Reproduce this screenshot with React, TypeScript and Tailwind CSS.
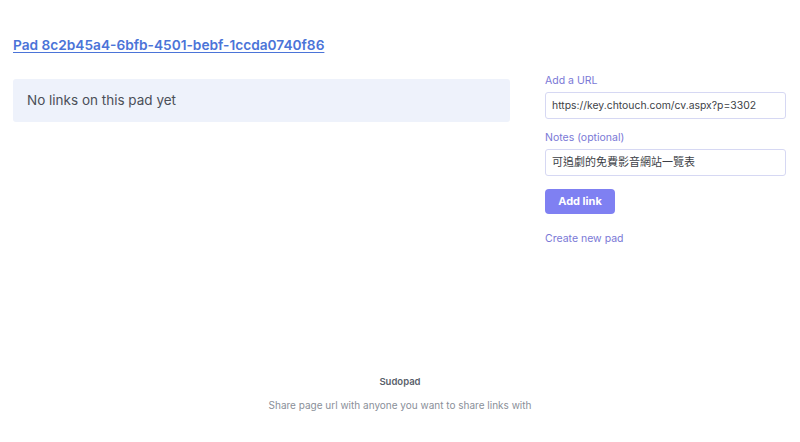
import React from "react";

export default function App() {
  return (
    <div
      className="flex h-[442px] w-[800px] flex-col bg-white"
      style={{ fontFamily: 'Inter, "Noto Sans CJK TC", sans-serif' }}
    >
      <main className="flex-1 px-[13px] pt-[32px]">
        <a
          href="#"
          className="text-[13.7px] font-semibold text-[#4b74d8] underline underline-offset-2"
        >
          Pad 8c2b45a4-6bfb-4501-bebf-1ccda0740f86
        </a>
        <div className="mt-[23px] flex gap-[35px]">
          <div className="flex h-[43px] w-[497px] items-center rounded-[3px] bg-[#eef2fb] px-[14px] text-[13.5px] text-[#4b4f58]">
            No links on this pad yet
          </div>
          <div className="flex w-[241px] flex-col">
            <label className="-mt-[5px] text-[10.5px] leading-[14px] text-[#7a78d6]">Add a URL</label>
            <div className="mt-[4px] flex h-[27px] items-center rounded-[3px] border border-[#d6d8f3] px-[6px] text-[10.4px] text-[#3d3f47]">
              https://key.chtouch.com/cv.aspx?p=3302
            </div>
            <label className="mt-[12px] text-[10.5px] leading-[14px] text-[#7a78d6]">Notes (optional)</label>
            <div className="mt-[4px] flex h-[27px] items-center rounded-[3px] border border-[#d6d8f3] px-[6px] text-[11px] text-[#3d3f47]">
              可追劇的免費影音網站一覽表
            </div>
            <button className="mt-[13px] flex h-[25px] w-[70px] items-center justify-center rounded-[4px] bg-[#7f80f2] text-[11px] font-bold text-white">
              Add link
            </button>
            <a href="#" className="mt-[17px] text-[10.5px] text-[#7a78d6]">
              Create new pad
            </a>
          </div>
        </div>
      </main>
      <footer className="flex flex-col items-center pb-[29px] text-center">
        <div className="text-[9.5px] font-semibold text-[#5a5f6b]">Sudopad</div>
        <div className="mt-[9px] text-[10px] text-[#8a8f99]">
          Share page url with anyone you want to share links with
        </div>
      </footer>
    </div>
  );
}
